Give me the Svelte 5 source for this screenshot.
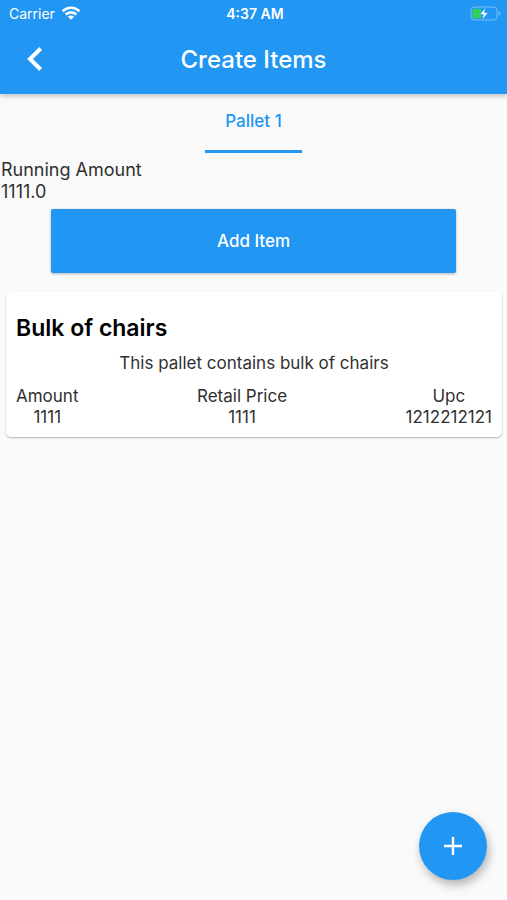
<script>
  const pallets = ["Pallet 1"];
  let selected = $state(0);

  let items = $state([
    {
      name: "Bulk of chairs",
      description: "This pallet contains bulk of chairs",
      amount: "1111",
      retailPrice: "1111",
      upc: "1212212121",
    },
  ]);

  const runningAmount = $derived(
    items.reduce((sum, item) => sum + Number(item.amount), 0).toFixed(1)
  );

  const addItem = () => {
    items.push({
      name: "New item",
      description: "No description",
      amount: "0",
      retailPrice: "0",
      upc: "-",
    });
  };
</script>

<div class="screen">
  <header class="app-bar">
    <div class="status">
      <div class="carrier">
        <span>Carrier</span>
        <svg width="20" height="14" viewBox="0 0 20 14" aria-hidden="true">
          <g fill="none" stroke="#fff" stroke-width="2.6">
            <path d="M1.6 5.2a12 12 0 0 1 16.8 0" />
            <path d="M4.7 8.5a7.6 7.6 0 0 1 10.6 0" />
          </g>
          <path d="M10 13.8 6.9 10.7a4.4 4.4 0 0 1 6.2 0Z" fill="#fff" />
        </svg>
      </div>
      <span class="time">4:37 AM</span>
      <svg class="battery" width="31" height="15" viewBox="0 0 31 15" aria-hidden="true">
        <rect x="1" y="1" width="26" height="13" rx="3.5" fill="none" stroke="#fff" stroke-opacity="0.4" />
        <path d="M28.6 5v5c1.2-.5 1.8-1.4 1.8-2.5S29.8 5.5 28.6 5Z" fill="#fff" fill-opacity="0.4" />
        <path d="M4 2.8h7v9.4H4a1.5 1.5 0 0 1-1.5-1.5V4.3A1.5 1.5 0 0 1 4 2.8Z" fill="#35cf5c" />
        <path d="M15.6 1.500 9.8 8.500h3.500l-1.200 5.400 5.900-7.200h-3.600Z" fill="#fff" stroke="#2196f3" stroke-width="0.6" />
      </svg>
    </div>
    <div class="toolbar">
      <button class="back" aria-label="Back">
        <svg width="16" height="24" viewBox="0 0 16 24" aria-hidden="true">
          <path d="M13.7 1.5 3 12l10.7 10.5" fill="none" stroke="#fff" stroke-width="4" />
        </svg>
      </button>
      <h1>Create Items</h1>
    </div>
  </header>

  <main>
    <div class="tabs" role="tablist">
      {#each pallets as pallet, i}
        <button
          class="tab"
          class:active={selected === i}
          role="tab"
          aria-selected={selected === i}
          onclick={() => (selected = i)}>{pallet}</button
        >
      {/each}
    </div>

    <div class="running">
      <div>Running Amount</div>
      <div>{runningAmount}</div>
    </div>

    <button class="add-item" onclick={addItem}>Add Item</button>

    {#each items as item}
      <article class="card">
        <h2>{item.name}</h2>
        <p>{item.description}</p>
        <dl>
          <div>
            <dt>Amount</dt>
            <dd>{item.amount}</dd>
          </div>
          <div>
            <dt>Retail Price</dt>
            <dd>{item.retailPrice}</dd>
          </div>
          <div>
            <dt>Upc</dt>
            <dd>{item.upc}</dd>
          </div>
        </dl>
      </article>
    {/each}
  </main>

  <button class="fab" aria-label="Add pallet">
    <svg width="18" height="18" viewBox="0 0 18 18" aria-hidden="true">
      <path d="M9 0v18M0 9h18" stroke="#fff" stroke-width="2.4" />
    </svg>
  </button>
</div>

<style>
  :global(body) {
    background: #fafafa;
  }

  .screen {
    min-height: 100vh;
    font-family: Inter, "Liberation Sans", sans-serif;
    color: #303030;
  }

  button {
    border: 0;
    padding: 0;
    font-family: inherit;
    cursor: pointer;
  }

  svg {
    display: block;
  }

  .app-bar {
    background: #2196f3;
    color: #fff;
    box-shadow: 0 2px 5px rgba(0, 0, 0, 0.24);
  }

  .status {
    display: grid;
    grid-template-columns: 1fr auto 1fr;
    align-items: center;
    height: 26px;
    padding: 0 6px 0 9px;
    font-size: 14px;
  }

  .carrier {
    display: flex;
    align-items: center;
    gap: 6px;
  }

  .time {
    font-weight: 600;
  }

  .battery {
    justify-self: end;
  }

  .toolbar {
    display: grid;
    grid-template-columns: 70px 1fr 70px;
    align-items: center;
    height: 66px;
    padding-bottom: 2px;
  }

  .back {
    display: grid;
    place-items: center;
    height: 66px;
    background: none;
  }

  h1 {
    margin: 0;
    text-align: center;
    font-size: 24px;
    font-weight: 500;
  }

  .tabs {
    display: flex;
    justify-content: center;
  }

  .tab {
    height: 59px;
    padding: 0 20px 2px;
    border-bottom: 3px solid transparent;
    background: none;
    color: #2196f3;
    font-size: 17px;
    font-weight: 500;
  }

  .tab.active {
    border-bottom-color: #2196f3;
  }

  .running {
    margin: 6px 1px;
    font-size: 18px;
    line-height: 22px;
  }

  .add-item {
    display: block;
    width: 80%;
    height: 64px;
    margin: 0 auto;
    border-radius: 2px;
    background: #2196f3;
    color: #fff;
    font-size: 17px;
    font-weight: 500;
    box-shadow: 0 1px 3px rgba(0, 0, 0, 0.3);
  }

  .card {
    margin: 19px 5px 0 6px;
    padding: 22px 10px 9px;
    border-radius: 5px;
    background: #fff;
    box-shadow: 0 1px 2px rgba(0, 0, 0, 0.28);
  }

  h2 {
    margin: 0;
    color: #000;
    font-size: 23px;
    line-height: 28px;
    font-weight: 600;
  }

  p {
    margin: 11px 0 12px;
    text-align: center;
    font-size: 17px;
    line-height: 21px;
  }

  dl {
    display: flex;
    justify-content: space-between;
    margin: 0;
    text-align: center;
    font-size: 17px;
    line-height: 21px;
  }

  dd {
    margin: 0;
  }

  .fab {
    position: fixed;
    right: 20px;
    bottom: 20px;
    display: grid;
    place-items: center;
    width: 68px;
    height: 68px;
    border-radius: 50%;
    background: #2196f3;
    box-shadow: 2px 5px 10px rgba(0, 0, 0, 0.28);
  }
</style>
